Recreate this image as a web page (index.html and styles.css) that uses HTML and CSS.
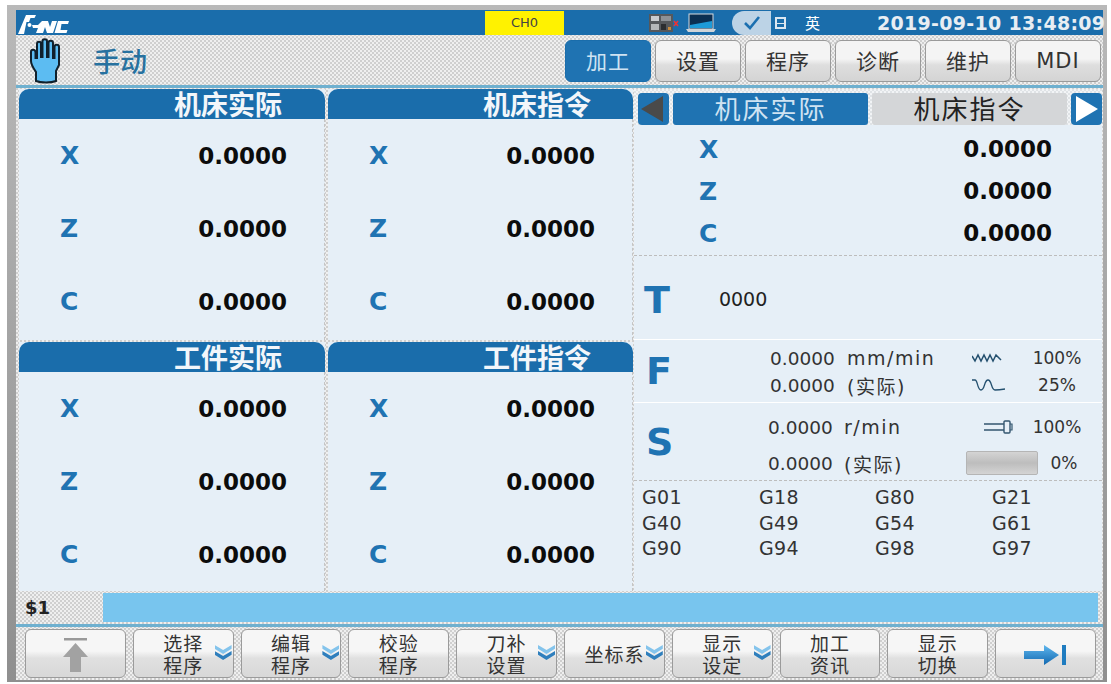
FILE: index.html
```html
<!DOCTYPE html>
<html lang="zh">
<head>
<meta charset="utf-8">
<title>CNC 手动</title>
<link rel="stylesheet" href="styles.css">
</head>
<body>
<div class="bezel">
  <div class="screen">
    <header class="titlebar">
      <svg class="logo" width="52" height="21" viewBox="0 0 52 21">
        <path fill="#fff" d="M0 20 L8 1 H18 L16.500 4 H12.500 L11 8 H8.500 L6 20 Z"/>
        <circle cx="11.500" cy="11" r="2" fill="#fff"/>
        <path fill="#fff" d="M14 11 H20 L24 7 H30 L32 13 L34 7 H39 L35 19 H29 L27 13 L25 19 H18 L20 14 H15 Z"/>
        <path fill="#fff" d="M40 7 H51 L50 10 H43.500 L42.500 16 H49.500 L48.500 19 H36.500 Z"/>
      </svg>
      <div class="channel">CH0</div>
      <div class="status">
        <svg class="panel-ico" width="30" height="20" viewBox="0 0 30 20">
          <rect x="0" y="1" width="24" height="18" fill="#55585c"/>
          <rect x="2" y="3" width="8" height="5" fill="#c9ccd0"/>
          <rect x="12" y="3" width="10" height="5" fill="#8d9196"/>
          <rect x="2" y="11" width="8" height="6" fill="#b4b7ba"/>
          <rect x="12" y="11" width="5" height="6" fill="#2b2d30"/>
          <rect x="19" y="14" width="3" height="3" fill="#c88a3a"/>
          <path d="M25 8 L29 13 M29 8 L25 13" stroke="#e33" stroke-width="1.600"/>
        </svg>
        <svg class="laptop" width="30" height="20" viewBox="0 0 30 20">
          <rect x="3" y="1" width="24" height="15" fill="#0b2f52" stroke="#d5dbe0"/>
          <path d="M4 12 L26 8 V15 H4 Z" fill="#1d9ad8"/>
          <path d="M0 16 H30 L28 19 H2 Z" fill="#cfd4d8"/>
        </svg>
        <div class="check">
          <svg width="24" height="22" viewBox="0 0 24 22"><path d="M5 11 L10 16 L19 5" fill="none" stroke="#1a6fb0" stroke-width="2.600"/></svg>
        </div>
        <div class="ime-box"></div>
        <span class="ime">英</span>
      </div>
      <div class="clock">2019-09-10 13:48:09</div>
    </header>

    <nav class="toolbar">
      <svg class="hand" width="36" height="46" viewBox="0 0 36 46">
        <path d="M7 43 V34 C5 31 2 27 2 23 V14 C2 11 6 11 6.500 14 V20 H8 V6 C8 3 12 3 12 6 V19 H13.500 V3 C13.500 0.500 18 0.500 18 3 V19 H19.500 V5 C19.500 2 24 2 24 5 V20 H25.500 V9 C25.500 6 30 6 30 9 V27 L27 33 V43 C22 45 12 45 7 43 Z" fill="#5cbcf2" stroke="#10202c" stroke-width="2"/>
      </svg>
      <span class="mode">手动</span>
      <div class="tabs">
        <button class="tab active">加工</button>
        <button class="tab">设置</button>
        <button class="tab">程序</button>
        <button class="tab">诊断</button>
        <button class="tab">维护</button>
        <button class="tab latin">MDI</button>
      </div>
    </nav>

    <main class="main">
      <section class="panel"><h2>机床实际</h2>
        <div class="axes">
          <div class="axis"><b>X</b><span>0.0000</span></div>
          <div class="axis"><b>Z</b><span>0.0000</span></div>
          <div class="axis"><b>C</b><span>0.0000</span></div>
        </div>
      </section>
      <section class="panel"><h2>机床指令</h2>
        <div class="axes">
          <div class="axis"><b>X</b><span>0.0000</span></div>
          <div class="axis"><b>Z</b><span>0.0000</span></div>
          <div class="axis"><b>C</b><span>0.0000</span></div>
        </div>
      </section>

      <aside class="side">
        <div class="switcher">
          <button class="arrow"><svg width="30" height="32" viewBox="0 0 30 32"><path d="M25 3 V29 L3 16 Z" fill="#4a4a4a"/></svg></button>
          <div class="pick on">机床实际</div>
          <div class="pick">机床指令</div>
          <button class="arrow"><svg width="30" height="32" viewBox="0 0 30 32"><path d="M5 3 V29 L27 16 Z" fill="#fff"/></svg></button>
        </div>
        <div class="side-axes">
          <div class="side-axis"><b>X</b><span>0.0000</span></div>
          <div class="side-axis"><b>Z</b><span>0.0000</span></div>
          <div class="side-axis"><b>C</b><span>0.0000</span></div>
        </div>
        <div class="tool"><b class="big">T</b><span class="tool-no">0000</span></div>
        <div class="feed">
          <b class="big">F</b>
          <div class="rows">
            <div class="row"><span class="num">0.0000</span><span class="unit">mm/min</span>
              <svg class="ico" width="36" height="12" viewBox="0 0 36 12"><path d="M0 4 L3 9 L6 3 L9 9 L12 3 L15 9 L18 3 L21 9 L24 3 L29 8" fill="none" stroke="#24506f" stroke-width="1.500"/></svg>
              <span class="pct">100%</span></div>
            <div class="row"><span class="num">0.0000</span><span class="unit">(实际)</span>
              <svg class="ico" width="36" height="16" viewBox="0 0 36 16"><path d="M0 3 H3 C6 3 5 13 9 13 C13 13 12 3 16 3 C20 3 19 13 23 13 C27 13 27 13 33 12" fill="none" stroke="#24506f" stroke-width="1.300"/></svg>
              <span class="pct">25%</span></div>
          </div>
        </div>
        <div class="spindle">
          <b class="big">S</b>
          <div class="rows">
            <div class="row"><span class="num">0.0000</span><span class="unit">r/min</span>
              <svg class="ico spin" width="30" height="16" viewBox="0 0 30 16"><path d="M0 5 H20 M0 11 H20" stroke="#33566f" stroke-width="1.400"/><rect x="20" y="2" width="6" height="12" rx="1" fill="none" stroke="#33566f" stroke-width="1.400"/><path d="M26 5 H28 V11 H26" fill="none" stroke="#33566f" stroke-width="1.200"/></svg>
              <span class="pct">100%</span></div>
            <div class="row"><span class="num">0.0000</span><span class="unit">(实际)</span>
              <div class="meter"></div>
              <span class="pct small">0%</span></div>
          </div>
        </div>
        <div class="gcodes">
          <span>G01</span><span>G18</span><span>G80</span><span>G21</span>
          <span>G40</span><span>G49</span><span>G54</span><span>G61</span>
          <span>G90</span><span>G94</span><span>G98</span><span>G97</span>
        </div>
      </aside>

      <section class="panel"><h2>工件实际</h2>
        <div class="axes">
          <div class="axis"><b>X</b><span>0.0000</span></div>
          <div class="axis"><b>Z</b><span>0.0000</span></div>
          <div class="axis"><b>C</b><span>0.0000</span></div>
        </div>
      </section>
      <section class="panel"><h2>工件指令</h2>
        <div class="axes">
          <div class="axis"><b>X</b><span>0.0000</span></div>
          <div class="axis"><b>Z</b><span>0.0000</span></div>
          <div class="axis"><b>C</b><span>0.0000</span></div>
        </div>
      </section>
    </main>

    <div class="cmdline">
      <span class="prompt">$1</span>
      <div class="cmd-input"></div>
    </div>

    <footer class="softkeys">
      <button class="key"><svg width="27" height="36" viewBox="0 0 27 36"><rect x="2" y="1" width="23" height="2.500" fill="#999"/><path d="M13.500 6 L26 20 H19 V35 H8 V20 H1 Z" fill="#a2a2a2"/></svg></button>
      <button class="key more">选择<br>程序<i></i></button>
      <button class="key more">编辑<br>程序<i></i></button>
      <button class="key">校验<br>程序</button>
      <button class="key more">刀补<br>设置<i></i></button>
      <button class="key more">坐标系<i></i></button>
      <button class="key more">显示<br>设定<i></i></button>
      <button class="key">加工<br>资讯</button>
      <button class="key">显示<br>切换</button>
      <button class="key"><svg width="44" height="22" viewBox="0 0 44 22"><defs><linearGradient id="go" x1="0" y1="0" x2="0" y2="1"><stop offset="0" stop-color="#5fb7ee"/><stop offset="1" stop-color="#1268b0"/></linearGradient></defs><path d="M0 7 H20 V1 L35 11 L20 21 V15 H0 Z" fill="url(#go)"/><rect x="38" y="1" width="4" height="20" fill="#1f7cc0"/></svg></button>
    </footer>
  </div>
</div>
</body>
</html>
```

FILE: styles.css
```css
* { box-sizing: border-box; }

html, body { margin: 0; height: 100%; background: #fff; overflow: hidden; }

body {
  padding: 5px 4px 2px 7px;
  font-family: "DejaVu Sans", "Noto Sans CJK SC", sans-serif;
  color: #222;
}

button { font: inherit; color: inherit; padding: 0; }

.bezel {
  height: 677px;
  padding: 5px 4px 2px 9px;
  background: linear-gradient(#b9b9b9, #8f8f8f);
}

.screen {
  height: 670px;
  display: flex;
  flex-direction: column;
  background: repeating-conic-gradient(#cfcfcf 0 25%, #efefef 0 50%) 0 0 / 4px 4px;
}

/* top status strip */
.titlebar {
  height: 25px;
  flex: none;
  display: flex;
  align-items: center;
  background: #1a6dab;
  color: #fff;
}

.logo { margin-left: 2px; margin-top: 3px; }

.channel {
  width: 79px;
  height: 24px;
  margin-left: 415px;
  margin-top: 1px;
  background: #fff200;
  color: #444;
  font-size: 13px;
  line-height: 24px;
  text-align: center;
}

.status {
  display: flex;
  align-items: center;
  margin-left: 85px;
}

.laptop { margin-left: 7px; }

.check {
  width: 39px;
  height: 24px;
  margin-left: 16px;
  border-radius: 14px 0 0 14px;
  background: #bcd3e6;
  display: flex;
  align-items: center;
  justify-content: center;
}

.ime-box {
  width: 11px;
  height: 12px;
  margin-left: 4px;
  border: 2px solid #dbe7f1;
  background: linear-gradient(#dbe7f1, #dbe7f1) 0 4px / 100% 1px no-repeat;
}

.ime {
  margin-left: 19px;
  font-size: 15px;
  font-family: "Noto Sans CJK SC", sans-serif;
}

.clock {
  margin-left: auto;
  margin-right: -2px;
  width: 228px;
  font-size: 19px;
  letter-spacing: 0.3px;
  font-weight: 700;
  color: #e8eef3;
  white-space: nowrap;
}

/* mode row and page tabs */
.toolbar {
  height: 53px;
  flex: none;
  display: flex;
  align-items: center;
  padding: 2px 0 0 13px;
  border-bottom: 3px solid #6fb0cf;
}

.mode {
  margin-left: 28px;
  padding-bottom: 2px;
  font-family: "Noto Sans CJK SC", sans-serif;
  font-size: 27px;
  font-weight: 500;
  color: #27719f;
}

.tabs {
  margin-left: auto;
  margin-right: 2px;
  display: flex;
  gap: 4px;
}

.tab {
  width: 86px;
  height: 42px;
  border: 1px solid #9a9a9a;
  border-radius: 6px;
  background: linear-gradient(#f4f4f4 0 45%, #dedede 60%, #d4d4d4);
  font-size: 21px;
  letter-spacing: 1px;
  color: #333;
  padding-bottom: 3px;
}

.tab.latin { padding-bottom: 0; }

.tab.active {
  background: #1f73b2;
  border-color: #1a6dab;
  color: #cfe3f2;
}

/* main grid: two position columns, one info column */
.main {
  flex: none;
  height: 503px;
  margin-top: 1px;
  padding: 0 1px 0 3px;
  display: grid;
  grid-template-columns: 306px 305px minmax(0, 1fr);
  grid-template-rows: 251px 249px;
  gap: 2px 3px;
}

.panel {
  display: flex;
  flex-direction: column;
  background: #e6eff7;
}

.panel h2 {
  margin: 0;
  height: 30px;
  flex: none;
  padding-left: 155px;
  border-radius: 10px 10px 0 0;
  background: #1a6dab;
  color: #f2f6fa;
  font-family: "Noto Sans CJK SC", sans-serif;
  font-size: 27px;
  font-weight: 700;
  line-height: 30px;
}

.axes {
  flex: 1;
  display: flex;
  flex-direction: column;
  border-right: 1px dashed #c4c4c4;
}

.axis {
  display: flex;
  align-items: center;
  justify-content: space-between;
  padding: 0 37px 0 41px;
  height: 73px;
}

.axis b, .side-axis b {
  color: #1f73b2;
  font-size: 25px;
  font-weight: 700;
}

.axis span, .side-axis span {
  color: #0c0c0c;
  font-size: 23px;
  font-weight: 700;
}

.side {
  grid-row: 1 / span 2;
  grid-column: 3;
  margin-left: -2px;
  display: flex;
  flex-direction: column;
  background: #e6eff7;
}

.switcher {
  height: 36px;
  flex: none;
  padding: 4px 0 0 4px;
  display: flex;
  gap: 4px;
  background: repeating-conic-gradient(#dfe3e6 0 25%, #f2f4f6 0 50%) 0 0 / 4px 4px;
}

.arrow {
  width: 31px;
  height: 32px;
  border: 0;
  border-radius: 4px;
  background: #1f73b2;
  display: flex;
}

.pick {
  width: 195px;
  height: 32px;
  border-radius: 3px;
  background: #d4d6d8;
  color: #222;
  font-family: "Noto Sans CJK SC", sans-serif;
  font-size: 26px;
  letter-spacing: 2px;
  line-height: 30px;
  text-align: center;
}

.pick.on { background: #1f73b2; color: #cfe3f2; }

.side-axes {
  height: 131px;
  flex: none;
  padding-top: 3px;
  border-bottom: 1px dashed #bdbdbd;
}

.side-axis {
  height: 42px;
  display: flex;
  align-items: center;
  justify-content: space-between;
  padding: 0 50px 0 65px;
}

.big {
  flex: none;
  color: #1f73b2;
  font-size: 38px;
  font-weight: 700;
  line-height: 1;
}

.tool {
  height: 84px;
  flex: none;
  display: flex;
  align-items: center;
  padding: 4px 0 0 10px;
  border-bottom: 1px solid #fff;
}

.tool-no {
  margin-left: 49px;
  margin-bottom: 2px;
  font-size: 19px;
  color: #222;
}

.feed, .spindle {
  flex: none;
  display: flex;
  align-items: center;
  padding-left: 12px;
}

.feed .big, .spindle .big { width: 41px; }

.feed { height: 63px; border-bottom: 1px solid #fff; }

.spindle { height: 78px; border-bottom: 1px dashed #bdbdbd; }

.rows {
  flex: 1;
  display: flex;
  flex-direction: column;
  font-size: 18.500px;
}

.feed .rows { margin-left: 83px; gap: 3px; padding-top: 1px; }

.spindle .rows { margin-left: 81px; gap: 12px; padding-top: 7px; }

.row {
  height: 24px;
  display: flex;
  align-items: center;
  color: #333;
}

.num { width: 76px; white-space: nowrap; }

.feed .num { width: 77px; }

.unit {
  width: 125px;
  font-size: 19px;
  letter-spacing: 1.500px;
  white-space: nowrap;
}

.spindle .unit { width: 125px; }

.ico { flex: none; }

.ico.spin { margin-left: 15px; }

.pct {
  margin-left: 24px;
  width: 50px;
  font-size: 17px;
  text-align: center;
}

.spindle .pct { margin-left: 18px; }

.meter {
  flex: none;
  width: 72px;
  height: 24px;
  margin-left: -3px;
  border: 1px solid #b5b5b5;
  border-radius: 2px;
  background: linear-gradient(#d4d4d4, #bdbdbd 50%, #d4d4d4);
}

.spindle .pct.small { margin-left: -1px; width: 54px; }

.gcodes {
  flex: 1;
  display: grid;
  grid-template-columns: 117px 116px 117px 1fr;
  grid-auto-rows: 25.500px;
  align-content: start;
  padding: 5px 0 0 8px;
  font-size: 19px;
  letter-spacing: 0.300px;
  color: #333;
}

/* command line */
.cmdline {
  height: 34px;
  flex: none;
  display: flex;
  margin-top: 1px;
  border-bottom: 3px solid #6fb0cf;
}

.prompt {
  width: 87px;
  padding: 4px 0 0 9px;
  font-size: 18px;
  font-weight: 700;
  color: #222;
}

.cmd-input {
  width: 995px;
  height: 29px;
  background: #78c5ee;
}

/* soft keys */
.softkeys {
  flex: 1;
  display: flex;
  gap: 7px;
  padding: 2px 7px 2px 9px;
}

.key {
  position: relative;
  flex: 1 1 0;
  min-width: 0;
  border: 1px solid #9b9b9b;
  border-radius: 6px;
  background: linear-gradient(#f6f6f6 0 45%, #e0e0e0 60%, #d8d8d8);
  font-size: 19px;
  letter-spacing: 1px;
  line-height: 22px;
  color: #333;
  display: flex;
  align-items: center;
  justify-content: center;
  text-align: center;
  padding-top: 2px;
}

/* double chevron marking a key that opens a submenu */
.key i {
  position: absolute;
  right: 1px;
  top: 15px;
  width: 17px;
  height: 15px;
}

.key i::before,
.key i::after {
  content: "";
  position: absolute;
  left: 0;
  width: 17px;
  height: 9px;
  clip-path: polygon(0 0, 50% 55%, 100% 0, 100% 42%, 50% 100%, 0 42%);
}

.key i::before { top: 0; background: #84c4ec; }

.key i::after { top: 6px; background: #2f7fbd; }
```
